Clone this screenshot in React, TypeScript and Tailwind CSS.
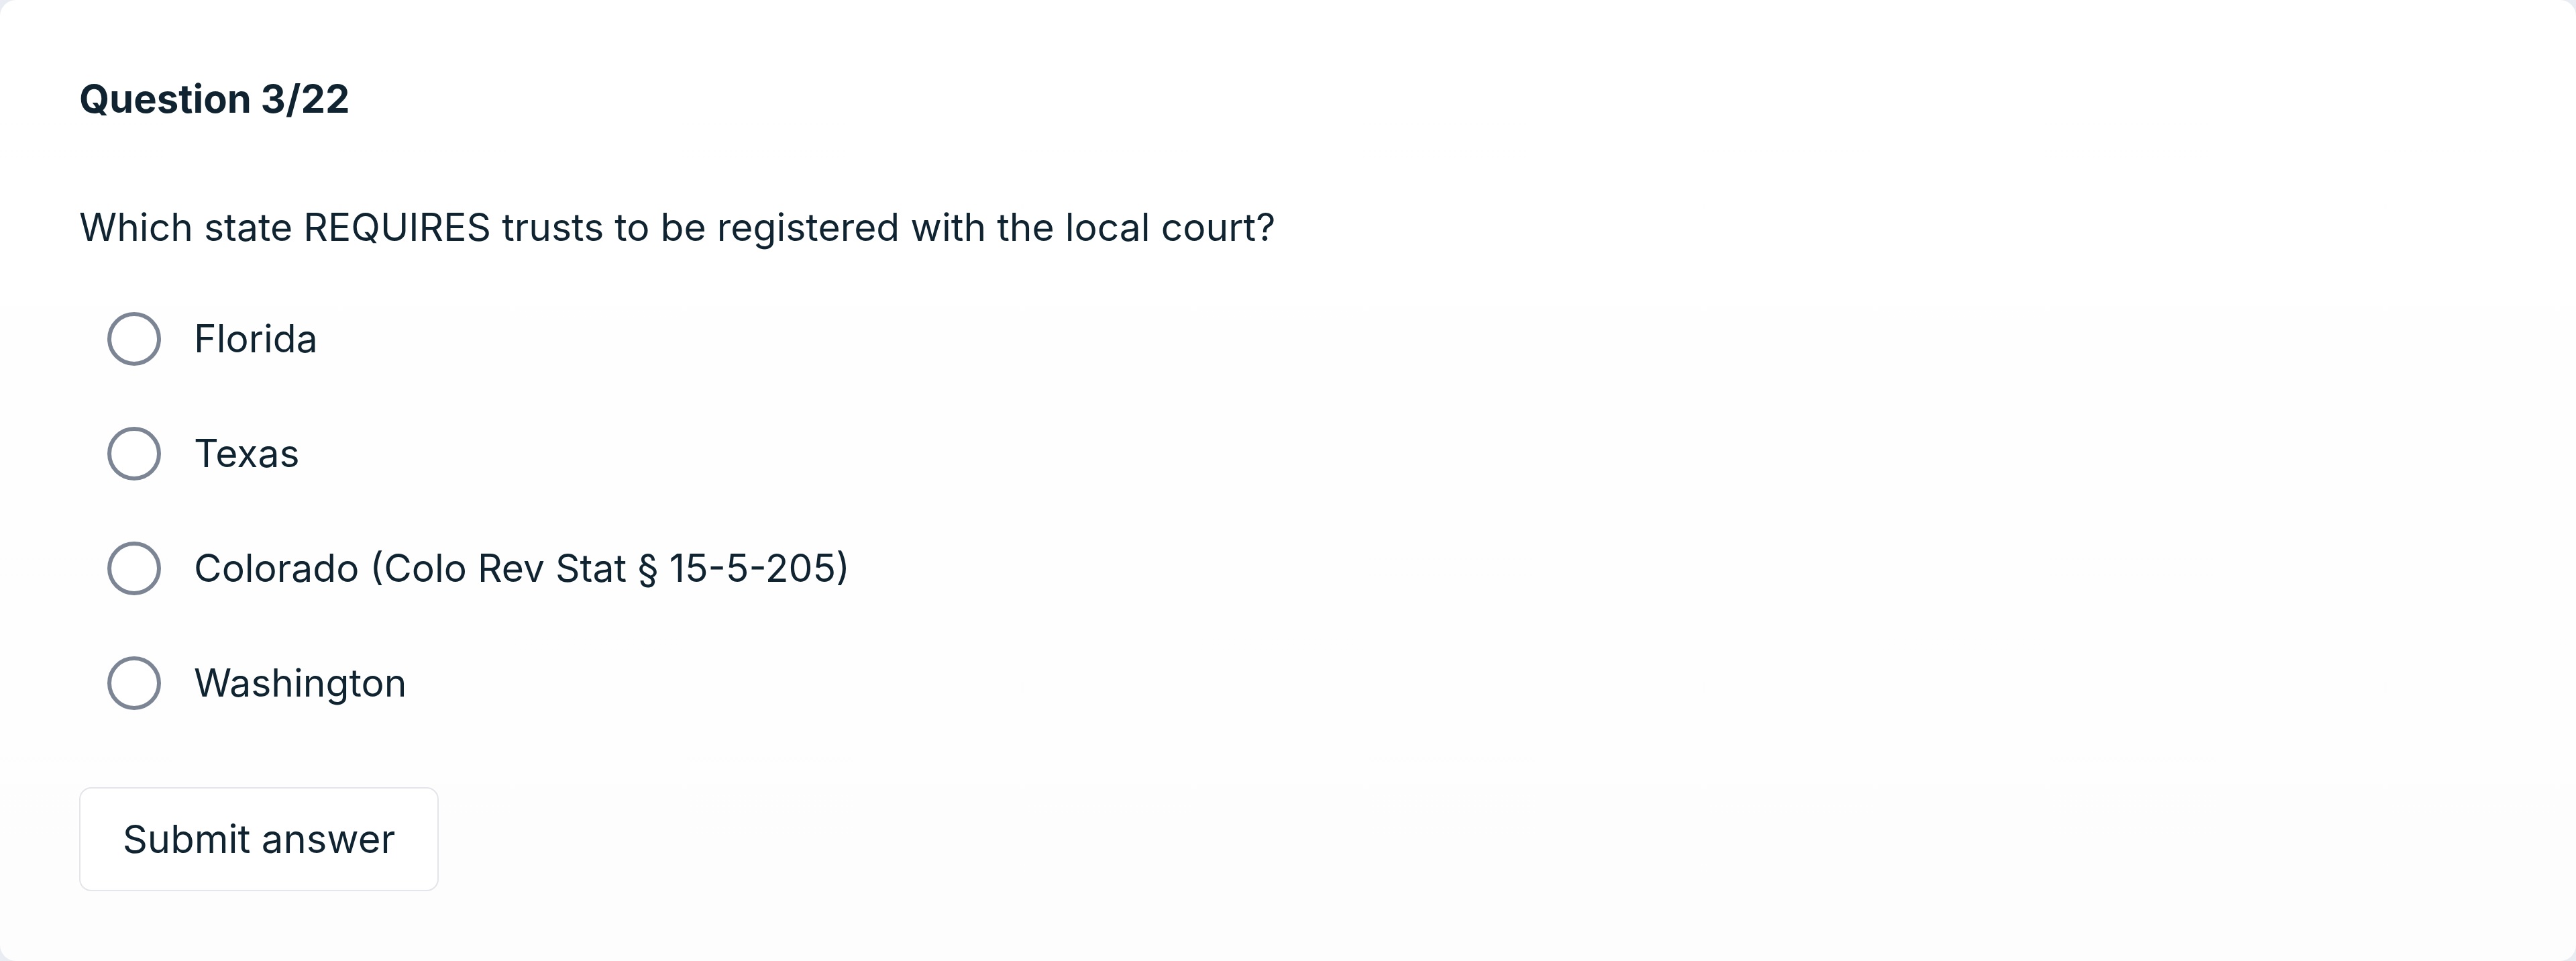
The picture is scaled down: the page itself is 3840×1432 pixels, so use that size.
import { JSX } from 'react'

const OPTIONS = ['Florida', 'Texas', 'Colorado (Colo Rev Stat § 15-5-205)', 'Washington']

function RadioOption({ label }: { label: string }): JSX.Element {
  return (
    <label className="flex h-[171px] items-center">
      <span className="ml-[42px] h-[80px] w-[80px] shrink-0 rounded-full border-[6px] border-[#7c8594] bg-white" />
      <span className="ml-[49px] text-[57px] leading-none text-[#0f2430]">{label}</span>
    </label>
  )
}

export default function App(): JSX.Element {
  return (
    <div className="h-[1432px] w-[3840px] bg-[#e9ecf2]" style={{ fontFamily: 'Inter, "Liberation Sans", sans-serif' }}>
      <div className="flex h-full w-full flex-col rounded-[24px] bg-gradient-to-b from-[#ffffff] to-[#fdfdfd] pl-[118px] pt-[111px]">
        <h2 className="text-[58px] font-bold leading-[72px] text-[#0f2430]">Question 3/22</h2>
        <p className="mt-[120px] text-[57px] leading-[72px] text-[#0f2430]">
          Which state REQUIRES trusts to be registered with the local court?
        </p>
        <div className="mt-[44px] flex flex-col">
          {OPTIONS.map((option) => (
            <RadioOption key={option} label={option} />
          ))}
        </div>
        <div className="mt-[70px]">
          <button className="h-[155px] w-[536px] rounded-[18px] border-2 border-[#e3e5ea] bg-white text-[58px] text-[#0f2430]">
            Submit answer
          </button>
        </div>
      </div>
    </div>
  )
}
